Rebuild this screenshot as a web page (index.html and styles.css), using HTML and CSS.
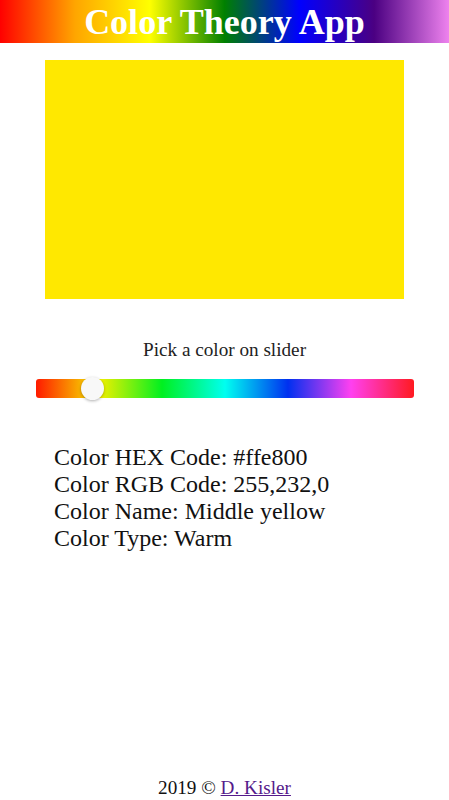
FILE: index.html
```html
<!DOCTYPE html>
<html>
<head>
<meta charset="utf-8">
<title>Color Theory App</title>
<link rel="stylesheet" href="styles.css">
</head>
<body>
<header class="header">
  <h1 class="title">Color Theory App</h1>
</header>
<main class="main">
  <div class="swatch"></div>
  <p class="prompt">Pick a color on slider</p>
  <div class="slider">
    <div class="thumb" style="left: 45px"></div>
  </div>
  <div class="info">
    <div>Color HEX Code: #ffe800</div>
    <div>Color RGB Code: 255,232,0</div>
    <div>Color Name: Middle yellow</div>
    <div>Color Type: Warm</div>
  </div>
</main>
<footer class="footer">2019 © <a class="link" href="#">D. Kisler</a></footer>
</body>
</html>
```
FILE: styles.css
```css
html, body {
  margin: 0;
  padding: 0;
}
body {
  font-family: "Liberation Serif", "Times New Roman", serif;
  font-size: 19.2px;
  color: #111;
  background: #fff;
  min-height: 100vh;
  display: flex;
  flex-direction: column;
}
.header {
  height: 43px;
  background: linear-gradient(to right, #ff0000, #ffa500, #ffff00, #008000, #0000ff, #4b0082, #ee82ee);
}
.title {
  margin: 0;
  font-size: 36px;
  font-weight: bold;
  line-height: 43px;
  padding-top: 1px;
  color: #fff;
  text-align: center;
}
.main {
  display: flex;
  flex-direction: column;
}
.swatch {
  width: 359px;
  height: 239px;
  margin: 17px auto 0;
  background: #ffe800;
}
.prompt {
  margin: 40px 0 0;
  text-align: center;
  color: #222;
}
.slider {
  position: relative;
  margin: 18px 35px 0 36px;
  height: 19px;
  border-radius: 3px;
  background: linear-gradient(to right, #ff1a00, #f5f000, #00f020, #00fff0, #0030f0, #ff40f0, #ff1a20);
}
.thumb {
  position: absolute;
  top: -2px;
  width: 23px;
  height: 23px;
  border-radius: 50%;
  background: #f8f8f8;
  box-shadow: 0 1px 3px rgba(0, 0, 0, 0.3);
}
.info {
  margin-top: 46px;
  padding-left: 54px;
  font-size: 24px;
  color: #111;
}
.footer {
  margin-top: auto;
  text-align: center;
  padding-bottom: 1px;
  color: #111;
}
.link {
  color: #551a8b;
}
```
